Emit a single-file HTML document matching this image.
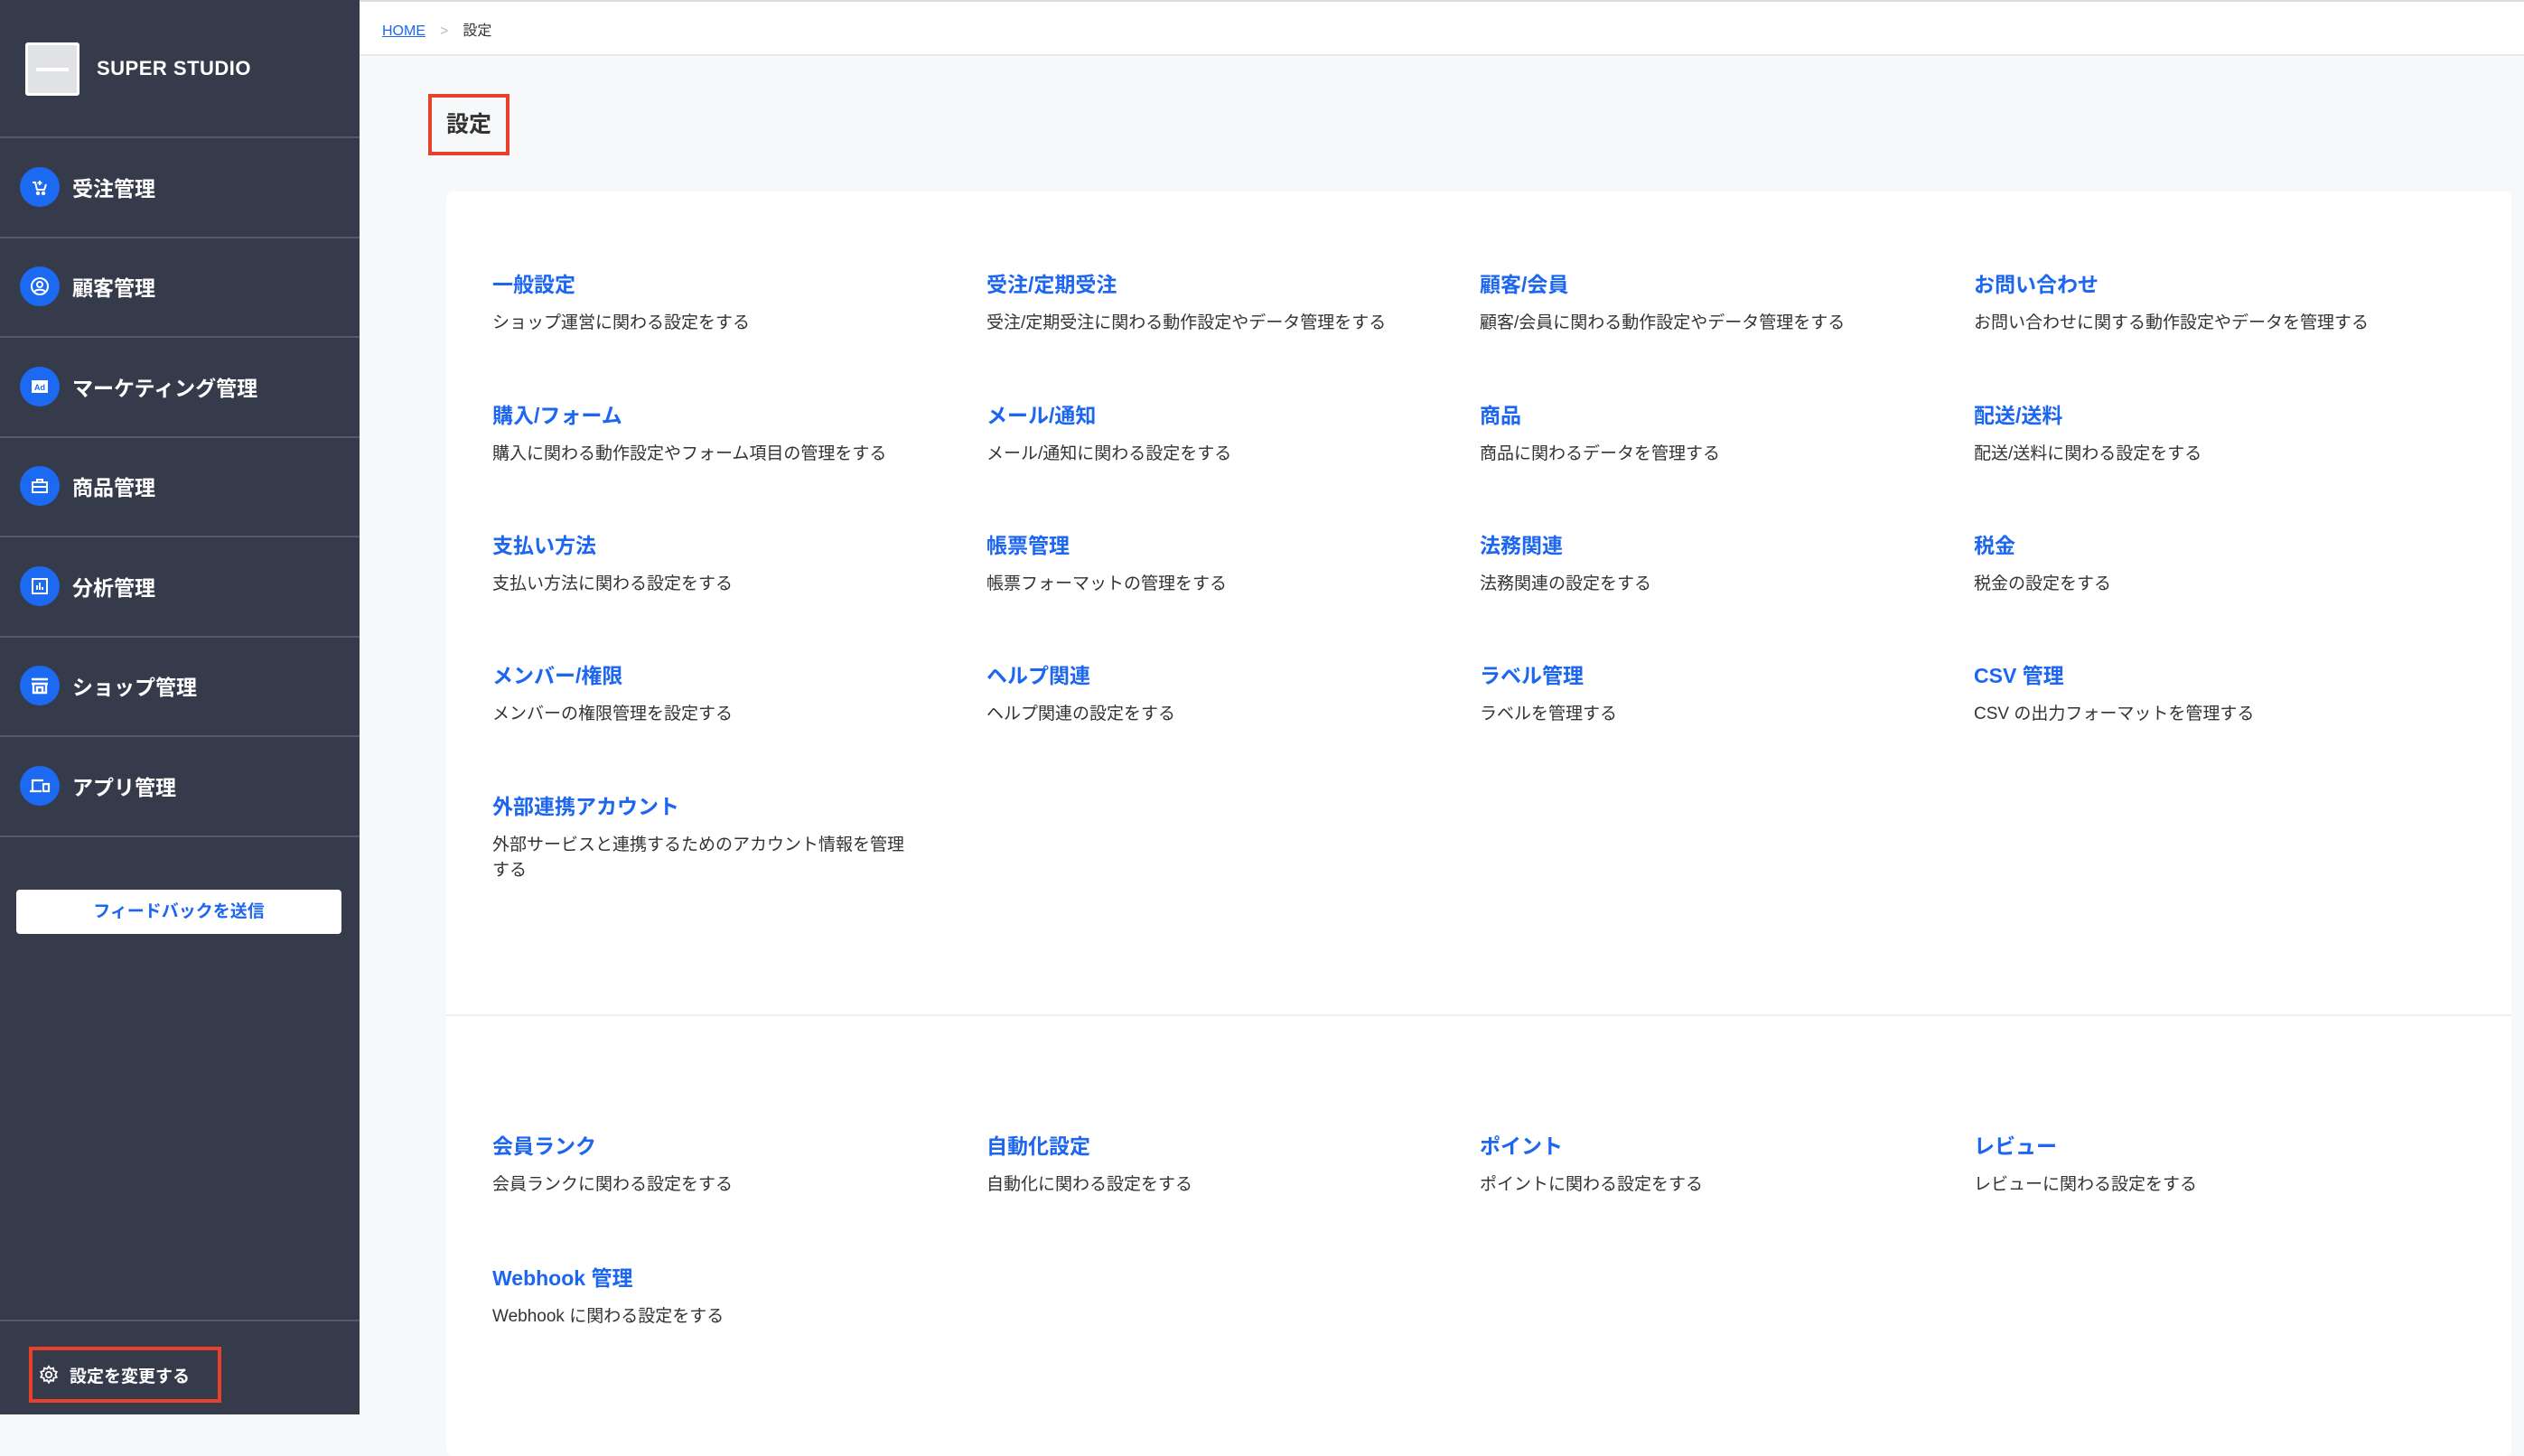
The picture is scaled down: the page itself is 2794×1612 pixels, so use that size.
<!DOCTYPE html>
<html><head><meta charset="utf-8"><style>
*{margin:0;padding:0;box-sizing:border-box}
body{width:2794px;height:1566px;overflow:hidden;background:#f7f8fa;font-family:"Liberation Sans","Noto Sans CJK JP",sans-serif;position:relative}
.sb{position:absolute;left:0;top:0;width:398px;height:1566px;background:#363b4c}
.logo{position:absolute;left:28px;top:47px;width:60px;height:59px;background:#e1e2e6;border:3px solid #fff;border-radius:3px}
.logo i{position:absolute;left:9px;top:25px;width:36px;height:4px;background:#fff}
.brand{position:absolute;left:107px;top:63px;color:#fff;font-size:22px;font-weight:bold;letter-spacing:0.5px}
.div{position:absolute;left:0;width:398px;height:2px;background:#555b6c}
.nav{position:absolute;left:22px;height:44px;display:flex;align-items:center;color:#fff;font-size:23px;font-weight:bold}
.nav .c{width:44px;height:44px;border-radius:50%;background:#1c6af2;margin-right:14px;display:flex;align-items:center;justify-content:center}
.fb{position:absolute;left:18px;top:985px;width:360px;height:49px;background:#fff;border-radius:4px;color:#1c66f0;font-size:19px;font-weight:bold;text-align:center;line-height:49px}
.set{position:absolute;left:32px;top:1491px;width:213px;height:62px;border:4px solid #e8402a;color:#fff;font-size:19px;font-weight:bold;display:flex;align-items:center;padding-left:7px}
.hdr{position:absolute;left:398px;top:0;right:0;height:62px;background:#fff;border-top:2px solid #ddd;border-bottom:2px solid #e6e8ec}
.bc{position:absolute;left:423px;top:20px;font-size:16px;color:#333}
.bc a{color:#1c66f0;text-decoration:underline}
.bc span{color:#bbb;margin:0 16px}
.title{position:absolute;left:474px;top:104px;width:90px;height:68px;border:4px solid #e8402a;font-size:25px;font-weight:bold;color:#333;text-align:center;line-height:60px}
.card{position:absolute;left:494px;top:212px;width:2286px;height:1400px;background:#fff;border-radius:8px}
.sep{position:absolute;left:494px;top:1123px;width:2286px;height:2px;background:#eceef1}
.it{position:absolute;width:480px}
.it b{display:block;color:#1c66f0;font-size:23px;font-weight:bold;line-height:30px}
.it p{margin-top:14px;color:#333;font-size:19px;line-height:28px}
</style></head><body>
<div class="sb">
<div class="logo"><i></i></div>
<div class="brand">SUPER STUDIO</div>
<div class="div" style="top:151px"></div>
<div class="div" style="top:262px"></div>
<div class="div" style="top:372px"></div>
<div class="div" style="top:483px"></div>
<div class="div" style="top:593px"></div>
<div class="div" style="top:704px"></div>
<div class="div" style="top:814px"></div>
<div class="div" style="top:925px"></div>
<div class="div" style="top:1461px"></div>
<div class="nav" style="top:185px"><div class="c"><svg width="20" height="20" viewBox="0 0 20 20" fill="none" stroke="#fff" stroke-width="2"><path d="M2 5h3l2 8h8l2-6M10 3v5M7.5 5.5h5"/><circle cx="8" cy="17" r="1.2" fill="#fff"/><circle cx="14" cy="17" r="1.2" fill="#fff"/></svg></div>受注管理</div>
<div class="nav" style="top:295px"><div class="c"><svg width="22" height="22" viewBox="0 0 22 22" fill="none" stroke="#fff" stroke-width="2"><circle cx="11" cy="11" r="9"/><circle cx="11" cy="9" r="3"/><path d="M5 17c2-3 10-3 12 0"/></svg></div>顧客管理</div>
<div class="nav" style="top:406px"><div class="c"><svg width="20" height="16" viewBox="0 0 20 16"><rect x="1" y="1" width="18" height="14" fill="#fff"/><text x="10" y="12" font-size="9" font-weight="bold" fill="#1c6af2" text-anchor="middle" font-family="Liberation Sans">Ad</text></svg></div>マーケティング管理</div>
<div class="nav" style="top:516px"><div class="c"><svg width="20" height="18" viewBox="0 0 20 18" fill="none" stroke="#fff" stroke-width="2"><rect x="2" y="5" width="16" height="11"/><path d="M7 5V2h6v3M2 10h16"/></svg></div>商品管理</div>
<div class="nav" style="top:627px"><div class="c"><svg width="20" height="20" viewBox="0 0 20 20" fill="none" stroke="#fff" stroke-width="2"><rect x="2" y="2" width="16" height="16"/><path d="M7 14V9M10 14V6M13 14v-3"/></svg></div>分析管理</div>
<div class="nav" style="top:737px"><div class="c"><svg width="22" height="20" viewBox="0 0 22 20" fill="none" stroke="#fff" stroke-width="2.4"><path d="M2 3h18M2 8h18M4 8v10h14V8M8 18v-6h6v6"/></svg></div>ショップ管理</div>
<div class="nav" style="top:848px"><div class="c"><svg width="24" height="18" viewBox="0 0 24 18" fill="none" stroke="#fff" stroke-width="2.2"><path d="M4 14V3h12M1 15h13"/><rect x="16" y="7" width="6" height="8"/></svg></div>アプリ管理</div>
<div class="fb">フィードバックを送信</div>
<div class="set"><svg width="22" height="22" viewBox="0 0 24 24" fill="none" stroke="#fff" stroke-width="2" style="margin-right:12px"><circle cx="12" cy="12" r="3.5"/><path d="M12 2l2 3 3.5-1 .5 3.5 3.5 1-1.5 3.5 1.5 3-3.5 1-.5 3.5-3.5-1-2 3-2-3-3.5 1-.5-3.5-3.5-1 1.5-3-1.5-3.5 3.5-1L6.5 4 10 5z"/></svg>設定を変更する</div>
</div>
<div class="hdr"></div>
<div class="bc"><a>HOME</a><span>&gt;</span>設定</div>
<div class="title">設定</div>
<div class="card"></div>
<div class="sep"></div>

<div class="it" style="left:545px;top:300px"><b>一般設定</b><p>ショップ運営に関わる設定をする</p></div>
<div class="it" style="left:1092px;top:300px;width:540px"><b>受注/定期受注</b><p>受注/定期受注に関わる動作設定やデータ管理をする</p></div>
<div class="it" style="left:1638px;top:300px;width:540px"><b>顧客/会員</b><p>顧客/会員に関わる動作設定やデータ管理をする</p></div>
<div class="it" style="left:2185px;top:300px;width:580px"><b>お問い合わせ</b><p>お問い合わせに関する動作設定やデータを管理する</p></div>

<div class="it" style="left:545px;top:445px;width:540px"><b>購入/フォーム</b><p>購入に関わる動作設定やフォーム項目の管理をする</p></div>
<div class="it" style="left:1092px;top:445px"><b>メール/通知</b><p>メール/通知に関わる設定をする</p></div>
<div class="it" style="left:1638px;top:445px"><b>商品</b><p>商品に関わるデータを管理する</p></div>
<div class="it" style="left:2185px;top:445px"><b>配送/送料</b><p>配送/送料に関わる設定をする</p></div>

<div class="it" style="left:545px;top:589px"><b>支払い方法</b><p>支払い方法に関わる設定をする</p></div>
<div class="it" style="left:1092px;top:589px"><b>帳票管理</b><p>帳票フォーマットの管理をする</p></div>
<div class="it" style="left:1638px;top:589px"><b>法務関連</b><p>法務関連の設定をする</p></div>
<div class="it" style="left:2185px;top:589px"><b>税金</b><p>税金の設定をする</p></div>

<div class="it" style="left:545px;top:733px"><b>メンバー/権限</b><p>メンバーの権限管理を設定する</p></div>
<div class="it" style="left:1092px;top:733px"><b>ヘルプ関連</b><p>ヘルプ関連の設定をする</p></div>
<div class="it" style="left:1638px;top:733px"><b>ラベル管理</b><p>ラベルを管理する</p></div>
<div class="it" style="left:2185px;top:733px"><b>CSV 管理</b><p>CSV の出力フォーマットを管理する</p></div>

<div class="it" style="left:545px;top:878px;width:470px"><b>外部連携アカウント</b><p>外部サービスと連携するためのアカウント情報を管理する</p></div>

<div class="it" style="left:545px;top:1254px"><b>会員ランク</b><p>会員ランクに関わる設定をする</p></div>
<div class="it" style="left:1092px;top:1254px"><b>自動化設定</b><p>自動化に関わる設定をする</p></div>
<div class="it" style="left:1638px;top:1254px"><b>ポイント</b><p>ポイントに関わる設定をする</p></div>
<div class="it" style="left:2185px;top:1254px"><b>レビュー</b><p>レビューに関わる設定をする</p></div>

<div class="it" style="left:545px;top:1400px"><b>Webhook 管理</b><p>Webhook に関わる設定をする</p></div>
</body></html>
